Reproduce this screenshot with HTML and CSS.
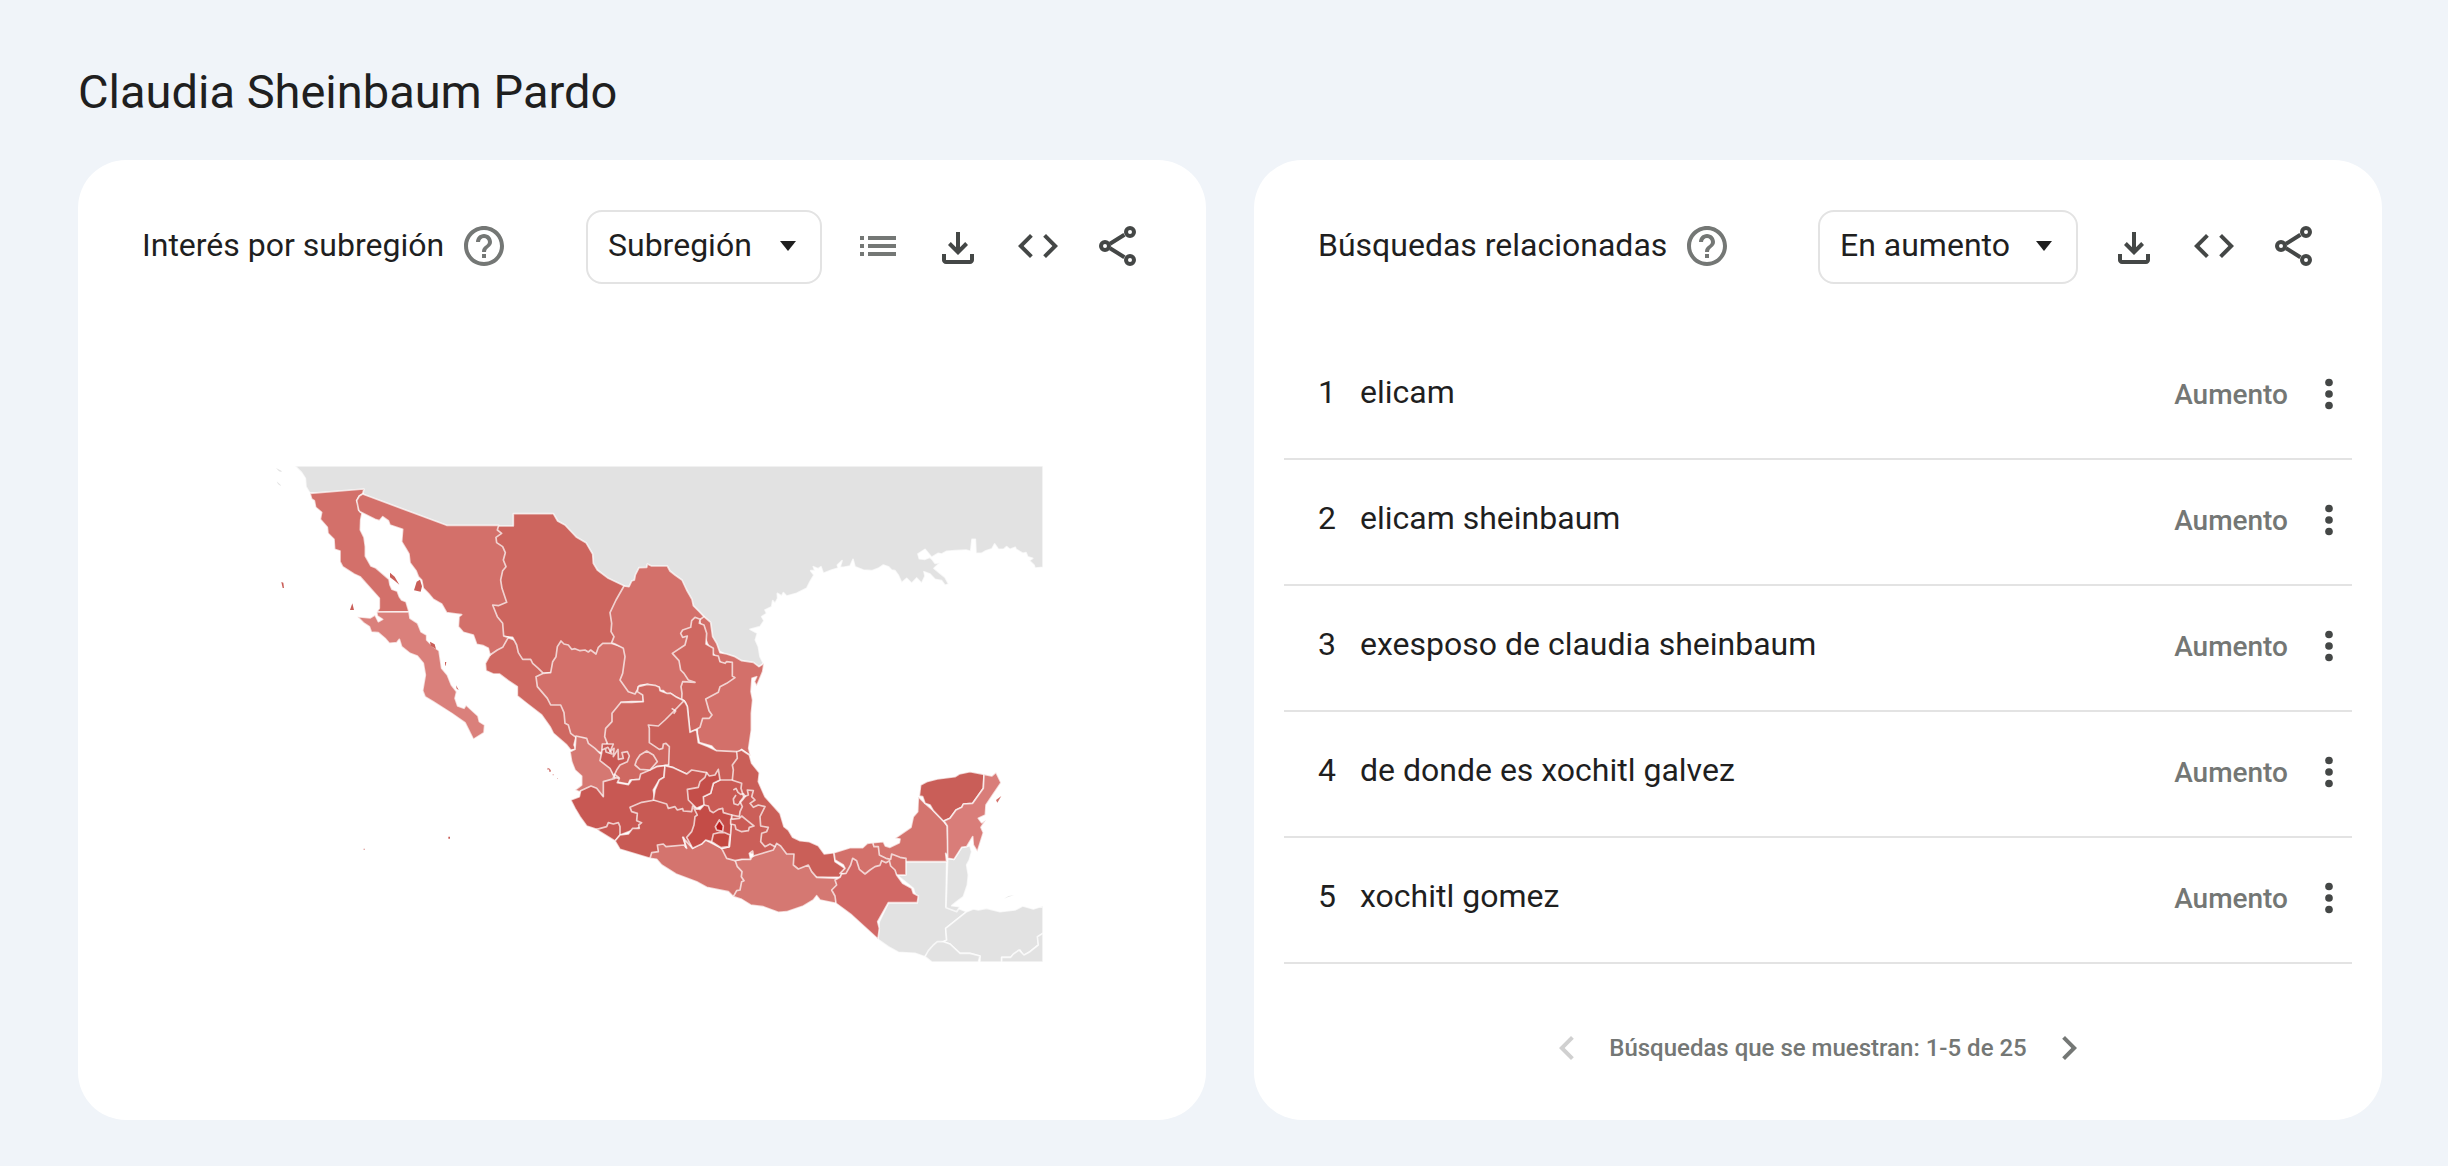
FILE: index.html
```
<!DOCTYPE html>
<html lang="es">
<head>
  <meta charset="UTF-8">
  <meta name="viewport" content="width=device-width, initial-scale=1">
  <title>Claudia Sheinbaum Pardo</title>
  <link rel="stylesheet" href="styles.css">
</head>
<body>
  <!-- Shared icons -->
  <svg class="sprite" aria-hidden="true">
    <symbol id="i-help" viewBox="0 0 24 24"><path d="M11 18h2v-2h-2v2zm1-16C6.480 2 2 6.480 2 12s4.480 10 10 10 10-4.480 10-10S17.520 2 12 2zm0 18c-4.410 0-8-3.590-8-8s3.590-8 8-8 8 3.590 8 8-3.590 8-8 8zm0-14c-2.210 0-4 1.790-4 4h2c0-1.100.9-2 2-2s2 .9 2 2c0 2-3 1.750-3 5h2c0-2.250 3-2.500 3-5 0-2.210-1.790-4-4-4z"/></symbol>
    <symbol id="i-list" viewBox="0 0 24 24"><path d="M3 7h2v2H3zM3 11h2v2H3zM3 15h2v2H3zM7 7h14v2H7zM7 11h14v2H7zM7 15h14v2H7z"/></symbol>
    <symbol id="i-download" viewBox="0 0 24 24"><path d="M12 16.500l-5-5 1.400-1.450 2.600 2.600V5h2v7.650l2.600-2.600L17 11.500zM6 21c-.55 0-1.020-.2-1.410-.59A1.930 1.930 0 0 1 4 19v-3h2v3h12v-3h2v3c0 .55-.2 1.020-.59 1.410-.39.39-.86.59-1.410.59z"/></symbol>
    <symbol id="i-code" viewBox="0 0 24 24"><path d="M9.400 16.600L4.800 12l4.600-4.600L8 6l-6 6 6 6 1.400-1.400zm5.200 0l4.600-4.600-4.600-4.600L16 6l6 6-6 6-1.400-1.400z"/></symbol>
    <symbol id="i-share" viewBox="0 0 24 24"><g fill="none" stroke="currentColor" stroke-width="2"><path d="M8 10.900l7.200-4.500M8 13.100l7.200 4.500"/><circle cx="5.500" cy="12" r="2"/><circle cx="18" cy="5" r="2"/><circle cx="18" cy="19" r="2"/></g></symbol>
    <symbol id="i-more" viewBox="0 0 24 24"><circle cx="12" cy="6" r="2"/><circle cx="12" cy="12" r="2"/><circle cx="12" cy="18" r="2"/></symbol>
    <symbol id="i-prev" viewBox="0 0 24 24"><path d="M15.410 7.410L14 6l-6 6 6 6 1.410-1.410L10.830 12z"/></symbol>
    <symbol id="i-next" viewBox="0 0 24 24"><path d="M10 6L8.590 7.410 13.170 12l-4.580 4.590L10 18l6-6z"/></symbol>
  </svg>

  <h1>Claudia Sheinbaum Pardo</h1>

  <main class="cards">
    <section class="card">
      <div class="card-header">
        <h2>Interés por subregión</h2>
        <button class="help-btn" aria-label="Ayuda"><svg><use href="#i-help"/></svg></button>
        <div class="select-wrap">
          <select class="geo-select" aria-label="Tipo de región">
            <option>Subregión</option>
            <option>Ciudad</option>
          </select>
        </div>
        <div class="actions">
          <button class="icon-btn light" aria-label="Ver lista"><svg><use href="#i-list"/></svg></button>
          <button class="icon-btn" aria-label="Descargar"><svg><use href="#i-download"/></svg></button>
          <button class="icon-btn" aria-label="Insertar"><svg><use href="#i-code"/></svg></button>
          <button class="icon-btn" aria-label="Compartir"><svg><use href="#i-share"/></svg></button>
        </div>
      </div>

      <div class="map-area">
        <svg class="map" viewBox="-57 48 2406 1488" role="img" aria-label="Mapa de México por subregión">
          <!-- Neighbouring countries -->
          <g class="other">
            <path d="M105 48H2349V352L2325 354 2322 345 2308 332 2318 325 2303 320 2298 308 2288 310 2268 298 2266 292 2250 298 2240 290 2232 297 2215 298 2204 282 2196 296 2178 302 2165 310 2148 310 2146 268 2136 268 2132 304 2118 300 2085 302 2060 304 2045 312 2035 310 2015 322 1995 298 1974 312 1978 326 1995 328 2010 322 2018 330 2025 340 2040 338 2022 355 2040 370 2055 382 2066 402 2055 406 2045 392 2025 388 2010 372 1992 365 1995 378 1985 400 1970 384 1955 400 1940 385 1925 398 1915 376 1905 362 1895 360 1885 350 1870 345 1855 355 1835 362 1810 360 1785 350 1779 328 1770 348 1750 352 1740 352 1746 332 1732 345 1735 354 1715 360 1690 370 1683 350 1675 356 1660 350 1665 362 1652 362 1662 375 1650 395 1640 415 1610 430 1580 438 1570 428 1565 438 1552 430 1553 445 1545 460 1538 452 1535 470 1515 480 1520 490 1505 500 1512 512 1500 530 1470 538 1492 550 1486 570 1495 590 1500 620 1510 640 1498 650 1480 660 1300 560 1000 450 800 500 560 250 330 150 302 125 150 130 145 122 138 110 136 85 125 68Z"/>
            <path class="islet" d="M48 54l16 8 1 4-8-2zM50 94l12 11 0 3-8-6z"/>
            <g transform="translate(1620 870)">
              <path d="M315 365H440L438 500 470 503 500 515 437 565 440 600 400 620 375 650 345 640 295 637 265 620 232 597 238 545 265 488 352 488 340 445 290 405 315 405Z"/>
              <path d="M443 355L462 358 485 322 510 318 515 335 508 360 500 375 505 405 502 435 490 470 470 485 455 497 480 500 470 515 438 503Z"/>
              <path d="M500 515L520 507 535 510 560 505 600 515 645 510 668 498 700 507 729 498V580L715 590 715 615 690 635 670 648 660 630 640 645 632 652 605 652V666H540V648L510 640 480 640 450 612 430 605 440 600 437 565Z"/>
              <path d="M400 615L412 605 430 605 450 612 480 640 510 640 540 648 535 666H395L375 650 385 632Z"/>
              <path d="M605 666V652H632L640 642 657 630 672 645 690 635 715 615 712 590 729 580V666Z"/>
              <path class="islet" d="M612 476l14-8 16-2-16 4z"/>
            </g>
          </g>

          <!-- North-west -->
          <g>
            <path fill="#d3706a" d="M150 130L312 117 308 132 298 138 290 152 296 165 296 180 306 190 302 210 301 240 312 262 316 290 316 318 333 348 348 354 387 388 390 405 396 418 412 424 418 440 425 450 438 455 447 485 350 486 358 475 358 445 300 380 282 372 248 350 240 335 240 303 224 298 222 268 204 250 202 232 181 208 185 187 167 172 163 152 155 147Z"/>
            <path fill="#da807b" d="M350 486H447L450 505 473 520 483 545 500 555 500 570 520 590 537 602 545 655 562 675 574 705 590 725 585 745 593 768 612 775 618 765 640 785 654 798 658 815 674 825 672 848 640 868 615 818 575 790 520 755 495 740 488 722 496 675 490 640 472 618 450 610 425 590 418 568 410 578 388 580 375 565 355 548 334 546 328 530 310 518 292 500 330 504 345 495 355 515 368 508 352 498Z"/>
            <path fill="#cf6861" d="M731 558L790 580 850 640 900 720 960 850 948 862 942 885 948 898 932 900 920 885 880 850 870 830 845 795 800 760 772 738 772 710 745 692 718 672 700 672 678 662 676 640 690 615Z"/>
            <path fill="#cd655e" d="M700 228H760V191H880L893 213 915 225 950 262 978 278 998 312 1000 340 1012 360 1045 385 1092 407 1110 430 1090 560 1060 600 1008 640 950 640 872 668 850 670 835 655 818 640 812 628 788 628 775 608 770 585 758 562 720 558 690 465 700 400Z"/>
            <path fill="#d3706a" d="M308 132L560 226H716L712 240 725 250 708 262 710 278 728 290 736 308 730 330 738 350 728 362 722 390 726 415 740 457 715 467 698 465 712 500 728 520 731 558 745 562 728 592 712 600 690 615 685 595 670 587 650 583 640 555 610 547 595 530 597 500 605 494 575 490 560 488 545 462 520 448 505 430 490 415 485 390 475 380 468 362 450 338 447 312 440 300 425 275 428 238 390 225 385 212 368 200 358 212 345 208 300 185 296 180 290 152 298 138Z"/>
            <path fill="#d3706a" d="M850 670L872 668 878 635 888 620 892 590 903 573 912 582 925 585 935 598 945 596 960 602 975 600 985 606 992 600 1008 612 1015 592 1028 580 1055 580 1120 600 1150 700 1150 755 1115 755 1083 757 1070 850 1042 880 1040 900 1022 908 1008 905 980 880 972 865 948 862 932 850 925 825 915 820 912 788 902 765 872 765 862 745 832 710 828 680Z"/>
            <path class="islet" fill="#c95e58" d="M64 396l6 2 2 16-4 0zM277 460l5 20-12 0zM390 368l14 12 14 24-14-12-14-10zM470 395l10-6 6 20-4 16-20-4zM510 575l14 8 4 14-16-10zM555 636l4 0-2 10-2 2zM588 706l8 14-6-4zM862 953l10 5-4 2zM565 1160h5v6h-5zM311 1196h3v3h-3z"/>
          </g>

          <!-- North-east -->
          <g transform="translate(900 150)">
            <path fill="#d3706a" d="M192 258L207 260 215 243 223 240 226 225 237 203 260 202 262 192 275 198H322L330 213 345 225 366 240 380 270 396 298 400 317 418 335 432 350 430 400 430 600 365 600 350 592 332 580 320 582 310 572 300 572 298 562 262 553 240 556 235 560 232 570 225 582 205 575 180 540 188 520 195 470 190 445 165 432 155 428 162 410 153 395 155 370 150 338 168 300Z"/>
            <path fill="#d3706a" d="M418 360L432 350 452 367 458 410 470 430 480 458 500 462 525 470 545 482 580 487 597 500 612 490 608 515 590 558 583 545 590 530 576 535 573 575 578 600 574 640 574 690 566 745 572 768 545 748 530 760 500 756 470 755 455 738 418 728 412 700 412 685 420 640 430 600 470 540 500 510 450 450 430 400Z"/>
            <path fill="#cf6861" d="M405 352L420 358 418 370 432 375 440 400 438 432 460 445 460 465 475 468 480 485 495 490 500 485 517 487V528L525 533 500 550 480 560 475 577 437 597 447 632 456 645 448 655 428 655 420 682 405 690 390 697 385 650 382 620 375 605 365 597 366 580 363 560 368 545 405 547 385 540 372 520 362 510 357 482 337 460 375 435 382 408 368 412 362 400 368 390 392 382 395 362Z"/>
          </g>

          <!-- Centre and south -->
          <g transform="translate(840 750)">
            <path fill="#cf6861" d="M243 7H275L310 5 308 -15 292 -25 295 -40 322 -47 345 -44 358 -38 360 -28 380 -20 392 -20 410 -8 432 2 420 130 386 195 350 200 310 225 298 238 270 240 265 252 225 245 180 220 186 160 202 130 194 110 197 85 216 65V40Z"/>
            <path fill="#ca6059" d="M432 2L436 8 442 20 445 50 450 97 465 90 470 92 475 128 505 140 530 152 590 155 640 200 590 250H540L500 260 440 222 400 203 375 197 386 195 388 140 378 130 370 132 368 145 358 148 328 128V85L325 75 355 78 375 60 405 30Z"/>
            <path fill="#d57872" d="M108 108L140 115 145 130 165 145 180 160 200 170 225 235 210 270 190 290 155 270 118 275 105 270 125 255V228L105 210 95 185 90 155 105 148Z"/>
            <path fill="#c85853" d="M187 132L220 132 210 155 222 145 220 170 234 148 235 178 250 175 246 158 262 155 268 168 262 185 240 195 230 210 220 232 238 235 232 248 265 254 275 240 298 238 302 222 330 210 350 200 375 197 372 232 358 240 340 270 345 300 320 340 305 380 240 405 200 395 170 388 140 378 120 350 105 325 92 300 118 290 122 272 153 258 170 265 190 290V245L225 235 210 205 180 182 185 158Z"/>
            <path fill="#cf6861" d="M300 165L320 153 340 165 352 185 330 210 300 208 285 195 290 180Z"/>
            <path fill="#c85853" d="M170 388L200 380 205 368 220 372 235 368 240 380V405L225 423 180 395Z"/>
            <path fill="#c85a54" d="M225 423L240 405 265 402 278 385 298 385 296 375 305 368 290 362 292 340 275 335 270 322 305 307 345 300 470 310 480 345 470 430 350 470 330 475 240 448Z"/>
            <path fill="#c85a54" d="M375 197L400 203 440 222 455 210 500 218 500 300 470 325 458 318 455 335 430 333 428 326 412 330 405 320 385 325 380 312 340 300 345 270 358 240 372 232Z"/>
            <path fill="#ca5f58" d="M590 155L605 150 628 165 635 190 658 218 655 245 675 290 700 318 720 340 732 380 745 390 758 412 780 422 808 425 835 437 853 462 882 458 885 485 915 505 900 532 830 532 700 480 630 460 620 350 600 290 577 240 580 210 577 195 592 175Z"/>
            <path fill="#d4746e" d="M330 475L335 458 355 455 352 435 370 432 378 440 432 435 440 445 428 412 458 445 475 435 485 432 497 420 545 445 600 475 620 540 600 580 580 590 565 575 500 562 470 545 408 522 365 495 350 478Z"/>
            <path fill="#d57872" d="M585 480L632 475 660 450 705 440 710 430 722 438 740 462 762 462 760 495 775 507 805 495 815 515 830 532 900 535 888 610 840 600 830 587 820 600 790 618 740 635 715 637 670 620 632 615 605 598 580 590 590 572 600 570 605 545 612 542 604 530 606 515 592 500Z"/>
            <path fill="#ca5b55" d="M540 240L575 240 605 250 603 265 620 320 600 350 575 360 510 345 485 315 490 290 512 280 520 250Z"/>
            <path fill="#cb5f59" d="M575 345L598 350 600 335 607 320 600 305 612 290 625 285 622 270 640 272 635 290 645 300 630 310 640 322 655 315 675 320 660 350 662 378 685 382 680 395 665 400 662 425 675 440 690 432 705 440 700 450 660 462 640 468 638 453 628 460 632 478 605 478 585 482 560 475 545 445 568 440Z"/>
            <path fill="#c44e49" d="M495 232L500 218 508 228 525 225 535 208 540 240 520 250 512 280 490 290 492 315 470 325 445 300 442 268 475 262 480 245Z"/>
            <path fill="#c44c47" d="M492 315L505 318 510 332 520 338 535 328 548 325 550 338 575 345 572 400 568 440 545 445 513 425 497 420 485 432 458 445 440 412 455 395 462 375 465 350 472 345 462 325 480 328Z"/>
            <path fill="#c2473f" d="M520 402L540 397 555 398 570 405 566 440 543 443 515 425Z"/>
            <path fill="#b71c1c" d="M538 360L550 378 548 394 530 390 526 380Z"/>
            <path fill="#ca5b55" d="M572 358L598 355 605 348 622 362 642 378 628 382 625 392 605 395 588 388 585 375 572 372Z"/>
            <path fill="none" d="M580 270l8-5 6 12 8 6 8-2 6 8-8 10-14 16-12-4-2-14 8-12M186 150l18-8 12 20-18-6-2-14M222 222l16 12M430 410l8 34M395 25l12 8-6 8"/>
            <path class="islet" fill="#d98b87" d="M22 205h4v4h-4zM27 210h6v5h-6zM38 223h3v3h-3zM52 234h2v2h-2z"/>
          </g>

          <!-- South-east and Yucatán peninsula -->
          <g transform="translate(1620 870)">
            <path fill="#d4746e" d="M355 170L375 190 400 212 430 243 442 258 445 350 437 340 440 365H315L240 370 218 340V308L250 305 256 318 270 322 298 308 300 297 285 295 333 262 340 230 353 215Z"/>
            <path fill="#d3706a" d="M102 338L150 323H188L202 310 218 308 222 320 235 320 238 345 258 355 272 358 275 342 300 352 318 355V405H290L260 385 195 410 120 400 135 385 130 375 105 360Z"/>
            <path fill="#d16865" d="M245 362L258 368 268 362 272 378 285 390 290 405 308 430 335 445 340 460 355 468 352 488H265L233 545 238 565 234 597 155 525 108 490 105 468 95 450 110 435 105 420 120 412 125 402 138 400 152 375 158 355 170 362 178 388 195 402 210 390 225 380 240 376Z"/>
            <path fill="#c95e58" d="M358 168L362 135 380 125 412 117 465 110 478 102 510 95 552 103 550 145 518 190 490 192 485 202 468 210 450 235 430 243 400 212 390 195 375 190 368 170Z"/>
            <path fill="#d97d79" d="M552 103L575 108 588 97 603 128 578 165 558 195 556 225 535 235 545 248 558 240 543 262 550 278 532 335 520 315 518 290 500 320 485 322 462 358 443 355 442 258 432 243 450 235 468 210 485 202 490 192 518 190 550 145Z"/>
            <path class="islet" fill="#d3706a" d="M588 180l16-12-12 20z"/>
          </g>
        </svg>
      </div>
    </section>

    <section class="card">
      <div class="card-header">
        <h2>Búsquedas relacionadas</h2>
        <button class="help-btn" aria-label="Ayuda"><svg><use href="#i-help"/></svg></button>
        <div class="select-wrap">
          <select class="sort-select" aria-label="Ordenar búsquedas">
            <option>En aumento</option>
            <option>Principales</option>
          </select>
        </div>
        <div class="actions">
          <button class="icon-btn" aria-label="Descargar"><svg><use href="#i-download"/></svg></button>
          <button class="icon-btn" aria-label="Insertar"><svg><use href="#i-code"/></svg></button>
          <button class="icon-btn" aria-label="Compartir"><svg><use href="#i-share"/></svg></button>
        </div>
      </div>

      <ol class="queries">
        <li>
          <span class="rank">1</span>
          <a href="#">elicam</a>
          <span class="change">Aumento</span>
          <button class="more-btn" aria-label="Más opciones"><svg><use href="#i-more"/></svg></button>
        </li>
        <li>
          <span class="rank">2</span>
          <a href="#">elicam sheinbaum</a>
          <span class="change">Aumento</span>
          <button class="more-btn" aria-label="Más opciones"><svg><use href="#i-more"/></svg></button>
        </li>
        <li>
          <span class="rank">3</span>
          <a href="#">exesposo de claudia sheinbaum</a>
          <span class="change">Aumento</span>
          <button class="more-btn" aria-label="Más opciones"><svg><use href="#i-more"/></svg></button>
        </li>
        <li>
          <span class="rank">4</span>
          <a href="#">de donde es xochitl galvez</a>
          <span class="change">Aumento</span>
          <button class="more-btn" aria-label="Más opciones"><svg><use href="#i-more"/></svg></button>
        </li>
        <li>
          <span class="rank">5</span>
          <a href="#">xochitl gomez</a>
          <span class="change">Aumento</span>
          <button class="more-btn" aria-label="Más opciones"><svg><use href="#i-more"/></svg></button>
        </li>
      </ol>

      <div class="pager">
        <button class="page-btn" aria-label="Anterior" disabled><svg><use href="#i-prev"/></svg></button>
        <span>Búsquedas que se muestran: 1-5 de 25</span>
        <button class="page-btn" aria-label="Siguiente"><svg><use href="#i-next"/></svg></button>
      </div>
    </section>
  </main>
</body>
</html>
```
FILE: styles.css
```
* {
  box-sizing: border-box;
}

body {
  margin: 0;
  padding: 64px 66px 46px 78px;
  background-color: #f0f4f9;
  color: #1f1f1f;
  font-family: Roboto, sans-serif;
}

h1 {
  margin: 0 0 40px;
  font-size: 47px;
  font-weight: 400;
  line-height: 56px;
}

.sprite {
  display: none;
}

.cards {
  display: grid;
  grid-template-columns: 1fr 1fr;
  gap: 48px;
}

.card {
  display: flex;
  flex-direction: column;
  padding: 50px 30px 48px;
  background-color: #fff;
  border-radius: 48px;
}

/* Card header */
.card-header {
  display: flex;
  align-items: center;
  height: 74px;
  padding: 0 18px 0 34px;
}

h2 {
  margin: 0;
  padding-bottom: 4px;
  font-size: 32px;
  font-weight: 400;
  line-height: 40px;
  white-space: nowrap;
}

button {
  display: flex;
  align-items: center;
  justify-content: center;
  flex: none;
  padding: 0;
  border: none;
  background: none;
  color: #444746;
  cursor: pointer;
}

button svg {
  width: 48px;
  height: 48px;
  fill: currentColor;
}

.help-btn {
  margin-left: 16px;
  padding-bottom: 2px;
  color: #747775;
}

.select-wrap {
  position: relative;
  margin-left: auto;
}

.select-wrap::after {
  content: "";
  position: absolute;
  top: 31px;
  right: 26px;
  border: 8px solid transparent;
  border-top: 10px solid #1f1f1f;
  border-bottom: none;
  pointer-events: none;
}

select {
  appearance: none;
  display: block;
  height: 74px;
  padding: 0 20px 4px;
  border: 2px solid #e3e3e3;
  border-radius: 16px;
  background: none;
  color: #1f1f1f;
  font-family: inherit;
  font-size: 32px;
  cursor: pointer;
}

.geo-select {
  width: 236px;
}

.sort-select {
  width: 260px;
}

.actions {
  display: flex;
  margin-left: 16px;
}

.icon-btn {
  width: 80px;
  height: 74px;
  padding-bottom: 2px;
}

.icon-btn.light {
  color: #747775;
}

/* Map */
.map-area {
  flex: 1;
  display: flex;
  align-items: center;
  justify-content: center;
  padding-top: 72px;
}

.map {
  width: 100%;
  max-width: 802px;
  stroke: rgba(255, 255, 255, 0.7);
  stroke-width: 5;
  stroke-linejoin: round;
}

.islet {
  stroke: none;
}

.other {
  fill: #e2e2e2;
}

/* Related queries */
.queries {
  margin: 50px 0 0;
  padding: 0;
  list-style: none;
}

.queries li {
  display: flex;
  align-items: center;
  height: 126px;
  padding: 0 0 4px 34px;
  border-bottom: 2px solid #e3e3e3;
  font-size: 32px;
}

.rank {
  width: 42px;
  padding-bottom: 4px;
}

.queries a {
  flex: 1;
  padding-bottom: 4px;
  color: inherit;
  text-decoration: none;
}

.change {
  color: #747775;
  font-size: 28px;
  font-weight: 500;
}

.more-btn {
  width: 46px;
  height: 48px;
  margin-left: 18px;
}

/* Pagination */
.pager {
  display: flex;
  align-items: center;
  justify-content: center;
  gap: 18px;
  margin-top: 60px;
  color: #747775;
  font-size: 24px;
  font-weight: 500;
}

.page-btn {
  color: #747775;
}

.page-btn:disabled {
  color: #d0d0d0;
  cursor: default;
}
```
